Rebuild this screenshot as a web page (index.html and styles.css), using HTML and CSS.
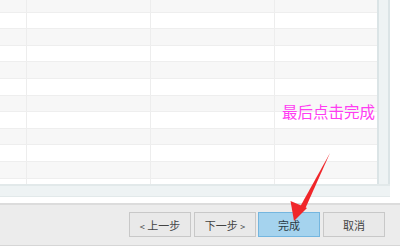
FILE: index.html
```html
<!DOCTYPE html>
<html lang="zh-CN">
<head>
    <meta charset="UTF-8">
    <title>完成</title>
    <link rel="stylesheet" href="styles.css">
</head>
<body>
    <div class="window">
        <div class="panel">
            <div class="frame">
                <div class="frame-main">
                    <div class="grid">
                        <div class="rows">
                            <div class="row alt"><span></span><span></span><span></span><span></span></div>
                            <div class="row"><span></span><span></span><span></span><span></span></div>
                            <div class="row alt"><span></span><span></span><span></span><span></span></div>
                            <div class="row"><span></span><span></span><span></span><span></span></div>
                            <div class="row alt"><span></span><span></span><span></span><span></span></div>
                            <div class="row"><span></span><span></span><span></span><span></span></div>
                            <div class="row alt"><span></span><span></span><span></span><span></span></div>
                            <div class="row"><span></span><span></span><span></span><span></span></div>
                            <div class="row alt"><span></span><span></span><span></span><span></span></div>
                            <div class="row"><span></span><span></span><span></span><span></span></div>
                            <div class="row alt"><span></span><span></span><span></span><span></span></div>
                            <div class="row"><span></span><span></span><span></span><span></span></div>
                        </div>
                    </div>
                    <div class="vbar"></div>
                </div>
                <div class="hbar"></div>
            </div>
        </div>

        <div class="footer">
            <button class="btn"><small>&lt;</small> 上一步</button>
            <button class="btn">下一步 <small>&gt;</small></button>
            <button class="btn primary">完成</button>
            <button class="btn">取消</button>
        </div>

        <!-- 注释 -->
        <div class="callout">最后点击完成</div>
        <svg class="arrow" width="400" height="250" viewBox="0 0 400 250">
            <path d="M330 153 L300.5 206 L305.5 208 Z" fill="#f0262a"/>
            <path d="M294 221 L290.5 201 L307 208 Z" fill="#f0262a"/>
        </svg>
    </div>
</body>
</html>
```

FILE: styles.css
```css
body {
    margin: 0;
    font-family: "Noto Sans CJK SC", "Noto Sans", sans-serif;
    overflow: hidden;
}

.window {
    position: relative;
    width: 400px;
    height: 250px;
    background: #fff;
    display: flex;
    flex-direction: column;
}

.panel {
    height: 203px;
    background: #fff;
    padding-right: 10px;
    box-sizing: border-box;
}

.frame {
    height: 197px;
    display: flex;
    flex-direction: column;
}

.frame-main {
    flex: 1;
    display: flex;
    min-height: 0;
}

.grid {
    width: 377px;
    overflow: hidden;
}

.rows {
    margin-top: -4px;
}

.row {
    display: flex;
    height: 16.6px;
    box-sizing: border-box;
    border-bottom: 1px solid #eeeeee;
    background: #fff;
}

.row.alt {
    background: #f7f7f7;
}

.row span {
    border-right: 1px solid #ededed;
    box-sizing: border-box;
}

.row span:nth-child(1) { width: 27px; }
.row span:nth-child(2) { width: 124px; }
.row span:nth-child(3) { width: 124px; }
.row span:nth-child(4) { flex: 1; border-right: none; }

.vbar {
    width: 13px;
    background: #eef3f4;
    border-left: 2px solid #dbe4e6;
    border-right: 2px solid #dbe4e6;
    box-sizing: border-box;
}

.hbar {
    height: 13px;
    background: #eef3f4;
    border-top: 2px solid #e2e9ea;
    border-bottom: 1px solid #e2e9ea;
    box-sizing: border-box;
}

.footer {
    height: 43px;
    background: #ececec;
    border-top: 2px solid #dcdcdc;
    border-bottom: 1px solid #d6d6d6;
    box-sizing: border-box;
    display: flex;
    justify-content: flex-end;
    align-items: flex-start;
    gap: 3px;
    padding: 7px 15px 0 0;
}

.btn {
    width: 62px;
    height: 25px;
    background: #e9e9e9;
    border: 1px solid #c8c8c8;
    color: #444;
    font-family: "Noto Sans CJK SC", "Noto Sans", sans-serif;
    font-size: 11px;
    padding: 0;
    cursor: pointer;
}

.btn small {
    font-size: 9px;
}

.btn.primary {
    margin-left: -1px;
    background: #a5d3ee;
    border-color: #74b6df;
    color: #2b3a44;
}

.callout {
    position: absolute;
    left: 282px;
    top: 101px;
    font-size: 15.5px;
    line-height: 20px;
    color: #ff3cf2;
    white-space: nowrap;
}

.arrow {
    position: absolute;
    left: 0;
    top: 0;
    pointer-events: none;
}
```
